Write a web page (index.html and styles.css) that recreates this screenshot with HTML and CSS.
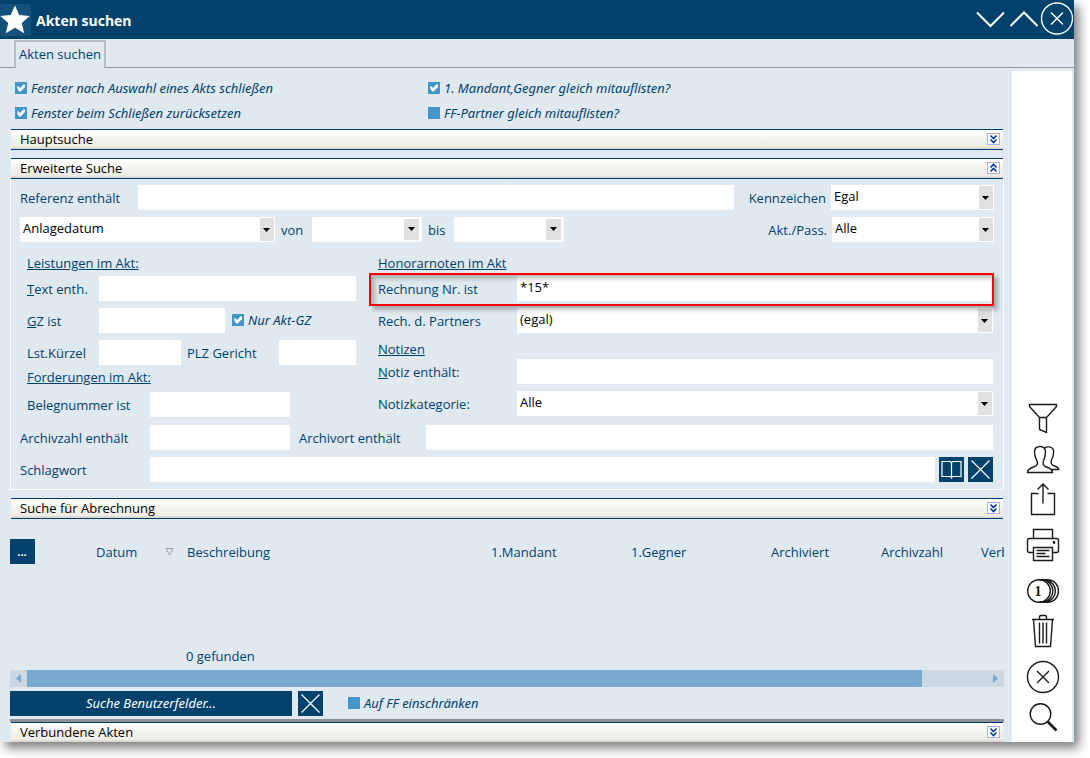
FILE: index.html
```html
<!DOCTYPE html>
<html lang="de">
<head>
<meta charset="utf-8">
<meta name="viewport" content="width=device-width, initial-scale=1">
<title>Akten suchen</title>
<link rel="stylesheet" href="styles.css">
</head>
<body>
<div class="window">
  <header class="titlebar">
    <span class="app-icon">
      <svg width="31" height="32" viewBox="0 0 31 32" aria-hidden="true"><path fill="#fff" d="M15 1.500l4.300 9.600 10.400 1-7.900 7 2.400 10.100L15 23.800l-9.200 5.400 2.400-10.100-7.900-7 10.400-1z"/></svg>
    </span>
    <h1 class="title">Akten suchen</h1>
    <div class="window-actions">
      <button type="button" class="window-action" aria-label="Nach unten"><svg viewBox="0 0 33 33"><path d="M3 10.500L16.500 24 30 10.500" stroke-width="2"/></svg></button>
      <button type="button" class="window-action" aria-label="Nach oben"><svg viewBox="0 0 33 33"><path d="M3.500 24L17 10.500 30.500 24" stroke-width="2"/></svg></button>
      <button type="button" class="window-action" aria-label="Schließen"><svg viewBox="0 0 33 33"><circle cx="17" cy="16.500" r="15.500" stroke-width="1.400"/><path d="M11 10.500l12 12M23 10.500l-12 12" stroke-width="1.400"/></svg></button>
    </div>
  </header>

  <nav class="tabs"><a class="tab" href="#suche">Akten suchen</a></nav>

  <div class="content">
    <main class="main" id="suche">
      <div class="options">
        <label class="check"><input type="checkbox" checked>Fenster nach Auswahl eines Akts schließen</label>
        <label class="check"><input type="checkbox" checked>1. Mandant,Gegner gleich mitauflisten?</label>
        <label class="check"><input type="checkbox" checked>Fenster beim Schließen zurücksetzen</label>
        <label class="check"><input type="checkbox">FF-Partner gleich mitauflisten?</label>
      </div>

      <section class="section">
        <div class="section-head">
          <h2 class="section-title">Hauptsuche</h2>
          <button type="button" class="toggle" aria-label="Hauptsuche aufklappen"><svg viewBox="0 0 11 10"><path d="M2.500 1.500l3 3 3-3M2.500 5.500l3 3 3-3"/></svg></button>
        </div>
      </section>

      <section class="section">
        <div class="section-head">
          <h2 class="section-title">Erweiterte Suche</h2>
          <button type="button" class="toggle" aria-label="Erweiterte Suche zuklappen"><svg viewBox="0 0 11 10"><path d="M2.500 4.500l3-3 3 3M2.500 8.500l3-3 3 3"/></svg></button>
        </div>
        <form class="panel">
          <div class="row">
            <label class="label w-wide" for="referenz">Referenz enthält</label>
            <input class="field grow" id="referenz" type="text">
            <label class="label label-end" for="kennzeichen">Kennzeichen</label>
            <select class="field select w-mark" id="kennzeichen"><option>Egal</option></select>
          </div>
          <div class="row">
            <select class="field select w-date-kind" aria-label="Datumsart"><option>Anlagedatum</option></select>
            <label class="label label-mid w-von" for="von">von</label>
            <select class="field select date" id="von"><option></option></select>
            <label class="label label-mid w-bis" for="bis">bis</label>
            <select class="field select date" id="bis"><option></option></select>
            <label class="label label-end grow" for="aktpass">Akt./Pass.</label>
            <select class="field select w-role" id="aktpass"><option>Alle</option></select>
          </div>

          <div class="groups">
            <div class="group group-left">
              <h3 class="group-title">Leistungen im Akt:</h3>
              <div class="row">
                <label class="label w-short" for="text"><u>T</u>ext enth.</label>
                <input class="field grow" id="text" type="text">
              </div>
              <div class="row">
                <label class="label w-short" for="gz"><u>G</u>Z ist</label>
                <input class="field w-gz" id="gz" type="text">
                <label class="check check-inline"><input type="checkbox" checked>Nur Akt-GZ</label>
              </div>
              <div class="row">
                <label class="label w-short" for="kuerzel">Lst.Kürzel</label>
                <input class="field w-code" id="kuerzel" type="text">
                <label class="label label-mid grow" for="plz">PLZ Gericht</label>
                <input class="field w-plz" id="plz" type="text">
              </div>
              <h3 class="group-title group-title-next">Forderungen im Akt:</h3>
              <div class="row row-after-title">
                <label class="label w-beleg" for="beleg">Belegnummer ist</label>
                <input class="field w-number" id="beleg" type="text">
              </div>
            </div>
            <div class="group">
              <h3 class="group-title">Honorarnoten im Akt</h3>
              <div class="row highlight">
                <label class="label w-right" for="rechnung">Rechnung Nr. ist</label>
                <input class="field grow" id="rechnung" type="text" value="*15*">
              </div>
              <div class="row">
                <label class="label w-right" for="partner">Rech. d. Partners</label>
                <select class="field select grow" id="partner"><option>(egal)</option></select>
              </div>
              <h3 class="group-title group-title-notes">Notizen</h3>
              <div class="row row-flush">
                <label class="label w-right" for="notiz"><u>N</u>otiz enthält:</label>
                <input class="field grow" id="notiz" type="text">
              </div>
              <div class="row">
                <label class="label w-right" for="kategorie">Notizkategorie:</label>
                <select class="field select grow" id="kategorie"><option>Alle</option></select>
              </div>
            </div>
          </div>

          <div class="row row-inset">
            <label class="label w-archive" for="archivzahl">Archivzahl enthält</label>
            <input class="field w-number" id="archivzahl" type="text">
            <label class="label w-archive-place" for="archivort">Archivort enthält</label>
            <input class="field grow" id="archivort" type="text">
          </div>
          <div class="row row-inset">
            <label class="label w-archive" for="schlagwort">Schlagwort</label>
            <input class="field grow" id="schlagwort" type="text">
            <button type="button" class="square" aria-label="Nachschlagen"><svg viewBox="0 0 25 25"><path d="M3 4.500h8.500l1 1.500 1-1.500H22v15h-8.500l-1 1.500-1-1.500H3zM12.500 6v14"/></svg></button>
            <button type="button" class="square" aria-label="Schlagwort löschen"><svg viewBox="0 0 25 25"><path d="M3.500 3.500l18 18M21.500 3.500l-18 18"/></svg></button>
          </div>
        </form>
      </section>

      <section class="section">
        <div class="section-head">
          <h2 class="section-title">Suche für Abrechnung</h2>
          <button type="button" class="toggle" aria-label="Suche für Abrechnung aufklappen"><svg viewBox="0 0 11 10"><path d="M2.500 1.500l3 3 3-3M2.500 5.500l3 3 3-3"/></svg></button>
        </div>
      </section>

      <div class="results">
        <table class="table">
          <colgroup><col class="c-menu"><col class="c-date"><col class="c-text"><col class="c-party"><col class="c-party"><col class="c-archived"><col class="c-number"><col class="c-last"></colgroup>
          <thead>
            <tr>
              <th><button type="button" class="square more" aria-label="Spalten wählen">...</button></th>
              <th><span class="sorted">Datum<svg width="9" height="9" viewBox="0 0 9 9" aria-hidden="true"><path d="M1 1.500h7L4.500 8z" fill="none" stroke="#999"/></svg></span></th>
              <th>Beschreibung</th>
              <th>1.Mandant</th>
              <th>1.Gegner</th>
              <th>Archiviert</th>
              <th>Archivzahl</th>
              <th>Verb</th>
            </tr>
          </thead>
        </table>
        <p class="count">0 gefunden</p>
      </div>

      <div class="scrollbar">
        <button type="button" class="scroll-step" aria-label="Nach links"><svg viewBox="0 0 17 17"><path d="M11 4v9L6 8.500z"/></svg></button>
        <div class="scroll-track"><div class="scroll-thumb"></div></div>
        <button type="button" class="scroll-step" aria-label="Nach rechts"><svg viewBox="0 0 17 17"><path d="M6 4v9l5-4.500z"/></svg></button>
      </div>

      <div class="footer">
        <button type="button" class="user-fields">Suche Benutzerfelder...</button>
        <button type="button" class="square" aria-label="Benutzerfelder löschen"><svg viewBox="0 0 25 25"><path d="M3.500 3.500l18 18M21.500 3.500l-18 18"/></svg></button>
        <label class="check"><input type="checkbox">Auf FF einschränken</label>
      </div>

      <section class="section section-last">
        <div class="section-head">
          <h2 class="section-title">Verbundene Akten</h2>
          <button type="button" class="toggle" aria-label="Verbundene Akten aufklappen"><svg viewBox="0 0 11 10"><path d="M2.500 1.500l3 3 3-3M2.500 5.500l3 3 3-3"/></svg></button>
        </div>
      </section>
    </main>

    <aside class="sidebar">
      <div class="tools">
        <button type="button" class="tool" aria-label="Filter"><svg viewBox="0 0 40 40"><path d="M7.500 5.500h27v2L24.500 18.500v15l-7-3v-12L7.500 7.500zM17.500 18.500h7"/></svg></button>
        <button type="button" class="tool" aria-label="Personen"><svg viewBox="0 0 40 40"><path d="M5.500 33.500c0-3 2-4 6-5.500 4-1.300 4.500-3.500 3.500-6-2-3.500-2.500-6-2.500-9 0-4 2-5.500 5.500-5.500s5.500 1.500 5.500 5.500c0 3-.5 5.500-2 9-1 2.500-.5 4.700 3 6 4 1.500 6 2.500 6 5.500zM22.500 9c3-2 9-1.500 9.200 3.500 0 3-.7 5.500-2.200 8.500-1.200 3 0 5 3 6 2.500.8 4 1.500 4.300 3.500h-7"/></svg></button>
        <button type="button" class="tool" aria-label="Exportieren"><svg viewBox="0 0 40 40"><path d="M16.500 14.500h-7v21h23v-21h-7M21 24.500v-19M15.500 10.500L21 5l5.500 5.500"/></svg></button>
      </div>
      <div class="tools">
        <button type="button" class="tool" aria-label="Drucken"><svg viewBox="0 0 40 40"><path d="M11.500 13.500v-9h19v9M11.500 27.500h-4c-1.500 0-2-.5-2-2v-10c0-1.500.5-2 2-2h27c1.500 0 2 .5 2 2v10c0 1.500-.5 2-2 2h-4M11.500 22.500h19v13h-19zM14.500 25.500h13M14.500 28.500h9M14.500 31.500h13"/><circle cx="32" cy="17.500" r=".7"/></svg></button>
      </div>
      <div class="tools">
        <button type="button" class="tool" aria-label="Münzen"><svg viewBox="0 0 40 40"><circle cx="17" cy="20" r="11.300"/><path d="M20 9c14.500 1 14.500 21 0 22M22.500 9c14.500 1 14.500 21 0 22M25 8.700c15.300 0 15.300 22.600 0 22.600M17 8.700h8M17 31.300h8"/><text class="coin" x="16" y="25" text-anchor="middle">1</text></svg></button>
        <button type="button" class="tool" aria-label="Löschen"><svg viewBox="0 0 40 40"><path d="M10 8.500h22M17.500 8V6c0-1 .5-1.500 1.500-1.500h4c1 0 1.500.5 1.500 1.500v2M11.500 8.500l2 27h15l2-27M17.500 11.500v21M21 11.500v21M24.500 11.500v21"/></svg></button>
      </div>
      <div class="tools">
        <button type="button" class="tool" aria-label="Abbrechen"><svg viewBox="0 0 40 40"><circle cx="21" cy="20" r="15.500"/><path d="M15 14l12 12M27 14L15 26"/></svg></button>
        <button type="button" class="tool" aria-label="Suchen"><svg viewBox="0 0 40 40"><circle cx="18.500" cy="17" r="10.300"/><path d="M25.500 24.500l9 9" stroke-width="2.600"/></svg></button>
      </div>
    </aside>
  </div>
</div>
</body>
</html>
```
FILE: styles.css
```css
* { box-sizing: border-box; }

:root {
  --navy: #00426b;
  --ink: #00426b;
  --surface: #e0e8f0;
  --blue: #4496c6;
}

body {
  margin: 0;
  background: #fff;
  color: var(--ink);
  font: 13px/20px "Open Sans", "Noto Sans", sans-serif;
}

button, input, select { font: inherit; color: inherit; margin: 0; }
button { border: 0; padding: 0; background: none; cursor: pointer; }
h1, h2, h3, p { margin: 0; font-size: 13px; font-weight: 400; }
svg { display: block; }

.window {
  display: flex;
  flex-direction: column;
  min-height: calc(100vh - 16px);
  margin: 0 16px 16px 0;
  background: var(--surface);
  box-shadow: 5px 6px 10px rgba(0, 0, 0, .5);
}

/* Title bar */
.titlebar {
  display: flex;
  align-items: center;
  height: 39px;
  padding-right: 1px;
  background: var(--navy);
  color: #fff;
}
.app-icon { border-radius: 3px; background: #14527c; }
.title { flex: 1; padding: 2px 0 0 5px; font-size: 14px; font-weight: 700; }
.window-actions { display: flex; }
.window-action { width: 33px; height: 35px; padding-bottom: 2px; }
.window-action svg { width: 33px; height: 33px; fill: none; stroke: #fff; }

/* Tabs */
.tabs {
  display: flex;
  height: 29px;
  padding: 1px 0 0 14px;
  border-bottom: 1px solid #8f9ba3;
}
.tab {
  height: 28px;
  padding: 2px 3px 0;
  border: 2px solid #b1bfcd;
  border-bottom: 0;
  background: var(--surface);
  color: var(--ink);
  text-decoration: none;
}

.content { display: flex; flex: 1; }
.main {
  display: flex;
  flex: 1;
  flex-direction: column;
  min-width: 0;
  padding: 8px 8px 0 10px;
}

/* Check boxes */
.options {
  display: grid;
  grid-template-columns: 413px 1fr;
  grid-auto-rows: 24px;
  row-gap: 1px;
  padding: 0 0 4px 5px;
}
.check {
  display: flex;
  align-items: center;
  gap: 4px;
  height: 24px;
  font-family: "Noto Sans", "Open Sans", sans-serif;
  font-style: italic;
  white-space: nowrap;
}
.check input {
  flex: none;
  width: 12px;
  height: 12px;
  appearance: none;
  background: var(--blue);
}
.check input:checked::after {
  content: "";
  display: block;
  height: 12px;
  background: #fff;
  clip-path: polygon(2px 5px, 3px 4px, 5px 6px, 9px 2px, 10px 3px, 10px 5px, 5px 10px, 3px 8px);
}
.check-inline { padding-left: 7px; }

/* Collapsible sections */
.section { margin-bottom: 8px; }
.section-head {
  display: flex;
  align-items: center;
  justify-content: space-between;
  height: 21px;
  padding: 0 3px 1px 9px;
  border: 1px solid #003b74;
  border-width: 1px 0;
  margin: 0 1px;
  background: linear-gradient(#fff 0, #fcfbf8 25%, #f2f2ec 50%, #efefe8 85%, #d5d0c4 100%);
  color: #000;
}
.section-title { line-height: 18px; }
.toggle { width: 13px; height: 12px; border: 1px solid #a9b0dc; background: #fff; }
.toggle svg { width: 11px; height: 10px; fill: none; stroke: #0033a0; stroke-width: 1.6; }

.panel {
  padding: 6px 9px 7px;
  border: 1px solid #fff;
  border-top: 0;
}

/* Form rows */
.row { display: flex; height: 25px; margin-top: 7px; }
.row:first-child, .row-flush { margin-top: 0; }
.row-after-title { margin-top: 5px; }
.row-inset, .groups { padding-right: 1px; }
.label { flex: none; line-height: 26px; white-space: nowrap; }
.label-end { padding: 0 5px 0 15px; text-align: right; }
.label-mid { padding: 0 6px; }
.field {
  flex: none;
  min-width: 0;
  height: 25px;
  padding: 0 3px 4px;
  border: 0;
  border-radius: 0;
  background-color: #fff;
  color: #000;
}
.field:focus { outline: 1px solid var(--blue); }
.grow { flex: 1; }
.select {
  appearance: none;
  padding-right: 18px;
  background-image:
    url("data:image/svg+xml,%3Csvg xmlns='http://www.w3.org/2000/svg' width='7' height='4'%3E%3Cpath d='M0 0h7L3.500 4z'/%3E%3C/svg%3E"),
    linear-gradient(#e0e0e0, #e0e0e0);
  background-position: right 5px top 11px, right 1px center;
  background-size: 7px 4px, 14px 23px;
  background-repeat: no-repeat;
}
.date {
  width: 110px;
  background-position: right 7px top 10px, right 3px center;
  background-size: 7px 4px, 15px 21px;
}
.w-wide { width: 118px; }
.w-mark { width: 163px; }
.w-role { width: 162px; }
.w-date-kind { width: 255px; }
.w-von { width: 37px; }
.w-bis { width: 32px; }
.w-short { width: 72px; }
.w-gz { width: 126px; }
.w-code { width: 82px; }
.w-plz { width: 77px; }
.w-beleg { width: 123px; }
.w-number { width: 140px; }
.w-right { width: 139px; }
.w-archive { width: 130px; }
.w-archive-place { width: 136px; padding-left: 9px; }

.groups {
  display: grid;
  grid-template-columns: 336px 1fr;
  column-gap: 22px;
  padding-top: 11px;
  padding-bottom: 1px;
}
.group-left { padding-left: 7px; }
.group-title { text-decoration: underline; }
.group-title + .row { margin-top: 3px; }
.group-title-next { margin-top: 2px; }
.group-title-next + .row-after-title { margin-top: 5px; }
.group-title-notes { margin-top: 6px; }
.group-title-notes + .row-flush { margin-top: 0; }

.highlight { position: relative; }
.highlight::after {
  content: "";
  position: absolute;
  inset: -3px -1px -5px -9px;
  border: 2px solid #f00;
  box-shadow: 4px 4px 4px rgba(0, 0, 0, .25), inset 4px 4px 4px rgba(0, 0, 0, .22);
  pointer-events: none;
}

.square { flex: none; width: 25px; height: 25px; background: var(--navy); color: #fff; }
.square svg { width: 25px; height: 25px; fill: none; stroke: #fff; stroke-width: 1.2; }
.row .square { margin-left: 4px; }

/* Results */
.results { display: flex; flex: 1; flex-direction: column; padding-top: 12px; overflow: hidden; }
.table { width: 100%; table-layout: fixed; border-collapse: collapse; }
.table th { height: 25px; padding: 0; overflow: hidden; font-weight: 400; text-align: left; white-space: nowrap; }
.table .more { display: block; font-size: 11px; font-style: italic; font-weight: 700; }
.sorted { display: flex; align-items: center; justify-content: space-between; padding-right: 13px; }
.c-menu { width: 86px; }
.c-date { width: 91px; }
.c-party { width: 140px; }
.c-archived { width: 110px; }
.c-number { width: 100px; }
.c-last { width: 23px; }
.count { margin-top: auto; padding: 0 0 4px 176px; }

.scrollbar { display: flex; height: 17px; background: #cbd7e1; }
.scroll-step { flex: none; width: 17px; }
.scroll-step svg { width: 17px; height: 17px; fill: #78aad0; }
.scroll-track { flex: 1; padding-right: 65px; }
.scroll-thumb { height: 100%; background: #78aad0; }

.footer { display: flex; gap: 6px; padding: 4px 0 3px; }
.footer .check { padding-left: 19px; }
.user-fields {
  width: 282px;
  height: 25px;
  padding-bottom: 1px;
  background: var(--navy);
  color: #fff;
  font-family: "Noto Sans", "Open Sans", sans-serif;
  font-style: italic;
}

.section-last { margin: 0; border-top: 3px solid #8f9295; }
.section-last .section-head { height: 20px; border-bottom: 0; }

/* Tool column */
.sidebar {
  display: flex;
  flex: none;
  flex-direction: column;
  justify-content: flex-end;
  gap: 6px;
  width: 62px;
  margin-top: 3px;
  padding: 0 10px 5px;
  border-right: 2px solid #dde8f2;
  background: #fff;
}
.tools { display: grid; }
.tool { width: 40px; height: 40px; }
.tool svg { width: 40px; height: 40px; fill: none; stroke: #1a1a1a; stroke-width: 1.4; }
.tool .coin { fill: #1a1a1a; stroke: none; font: 700 14px "Liberation Serif", serif; }
```
